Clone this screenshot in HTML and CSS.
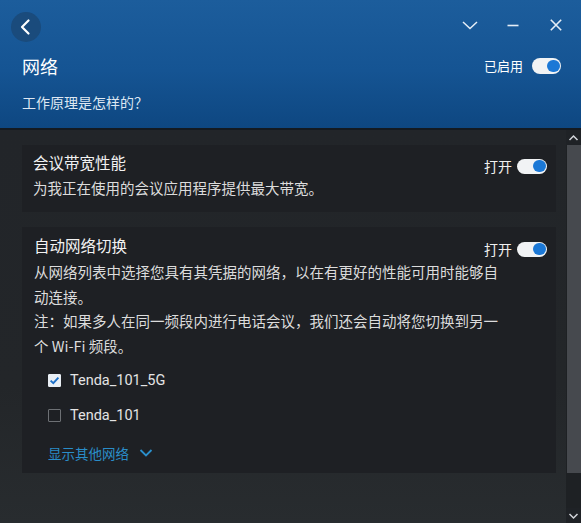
FILE: index.html
```html
<!DOCTYPE html>
<html lang="zh-CN">
<head>
<meta charset="utf-8">
<title>网络</title>
<link rel="stylesheet" href="styles.css">
</head>
<body>
<div class="app">
  <header class="header">
    <div class="topbar">
      <button class="back" aria-label="返回">
        <svg width="28" height="28" viewBox="0 0 28 28"><path d="M16.5 7.5 L10 14 L16.5 20.5" fill="none" stroke="#ffffff" stroke-width="2.2" stroke-linecap="round" stroke-linejoin="round"/></svg>
      </button>
      <div class="wincontrols">
        <svg width="16" height="16" viewBox="0 0 16 16"><path d="M1 5 L8 11.5 L15 5" fill="none" stroke="#e6eef7" stroke-width="1.5"/></svg>
        <svg width="16" height="16" viewBox="0 0 16 16"><path d="M2.5 8.5 H13.5" fill="none" stroke="#e6eef7" stroke-width="1.6"/></svg>
        <svg width="16" height="16" viewBox="0 0 16 16"><path d="M2.8 2.8 L13.2 13.2 M13.2 2.8 L2.8 13.2" fill="none" stroke="#e6eef7" stroke-width="1.6"/></svg>
      </div>
    </div>
    <div class="title-row">
      <h1 class="title">网络</h1>
      <div class="switch-group">
        <span class="switch-label head-label">已启用</span>
        <span class="toggle toggle-head"><span class="knob"></span></span>
      </div>
    </div>
    <div class="subtitle">工作原理是怎样的？</div>
  </header>

  <div class="main">
    <div class="content">
      <section class="card card-one">
        <div class="card-head">
          <h2 class="card-title">会议带宽性能</h2>
          <div class="switch-group card-switch">
            <span class="switch-label">打开</span>
            <span class="toggle"><span class="knob"></span></span>
          </div>
        </div>
        <p class="card-desc single">为我正在使用的会议应用程序提供最大带宽。</p>
      </section>

      <section class="card card-two">
        <div class="card-head">
          <h2 class="card-title">自动网络切换</h2>
          <div class="switch-group card-switch">
            <span class="switch-label">打开</span>
            <span class="toggle"><span class="knob"></span></span>
          </div>
        </div>
        <p class="card-desc multi">从网络列表中选择您具有其凭据的网络，以在有更好的性能可用时能够自动连接。<br>注：如果多人在同一频段内进行电话会议，我们还会自动将您切换到另一个 Wi-Fi 频段。</p>
        <div class="networks">
          <label class="net">
            <span class="check checked">
              <svg width="13" height="13" viewBox="0 0 13 13"><path d="M2.6 6.6 L5.3 9.2 L10.4 3.6" fill="none" stroke="#1c6fc8" stroke-width="1.9"/></svg>
            </span>
            <span class="net-name">Tenda_101_5G</span>
          </label>
          <label class="net second">
            <span class="check"></span>
            <span class="net-name">Tenda_101</span>
          </label>
        </div>
        <a class="more" href="#">显示其他网络
          <svg width="14" height="10" viewBox="0 0 14 10"><path d="M1.5 2 L7 7.5 L12.5 2" fill="none" stroke="#2b8fcc" stroke-width="1.8"/></svg>
        </a>
      </section>
    </div>
    <div class="scrollbar">
      <div class="sb-arrow">
        <svg width="11" height="8" viewBox="0 0 11 8"><path d="M1.5 6 L5.5 2 L9.5 6" fill="none" stroke="#d2d5d9" stroke-width="1.5"/></svg>
      </div>
      <div class="sb-thumb"></div>
      <div class="sb-track"></div>
      <div class="sb-arrow">
        <svg width="11" height="8" viewBox="0 0 11 8"><path d="M1.5 2 L5.5 6 L9.5 2" fill="none" stroke="#d2d5d9" stroke-width="1.5"/></svg>
      </div>
    </div>
  </div>
</div>
</body>
</html>
```

FILE: styles.css
```css
* { box-sizing: border-box; }

html, body {
  margin: 0;
  padding: 0;
  width: 581px;
  height: 523px;
  overflow: hidden;
  background: #25282c;
  font-family: "Noto Sans CJK SC", "Noto Sans", sans-serif;
  color: #e6e6e6;
}

.app {
  width: 581px;
  height: 523px;
  display: flex;
  flex-direction: column;
}

/* Header */
.header {
  height: 130px;
  flex: none;
  background: linear-gradient(180deg, #1c5d9c 0%, #155493 55%, #0e4781 100%);
  border-bottom: 2px solid #141a21;
  padding: 0 20px 0 22px;
  color: #ffffff;
}

.topbar {
  height: 53px;
  display: flex;
  align-items: center;
  justify-content: space-between;
}

.back {
  width: 30px;
  height: 30px;
  margin-left: -11px;
  margin-top: 1px;
  border: none;
  border-radius: 50%;
  background: #1a4b7c;
  padding: 0;
  display: flex;
  align-items: center;
  justify-content: center;
}

.wincontrols {
  display: flex;
  align-items: center;
  gap: 27px;
  margin-right: -2.5px;
  margin-top: -4px;
}

.title-row {
  height: 26px;
  display: flex;
  align-items: center;
  justify-content: space-between;
}

.title {
  margin: 0;
  font-size: 18px;
  font-weight: 400;
  line-height: 26px;
  color: #ffffff;
}

.subtitle {
  margin-top: 13px;
  font-size: 14px;
  line-height: 20px;
  color: #dde7f2;
}

.switch-group {
  display: flex;
  align-items: center;
}

.switch-label {
  font-size: 14px;
  line-height: 20px;
  color: #f0f0f0;
  margin-right: 5px;
}

.head-label {
  font-size: 13px;
  color: #ffffff;
  margin-right: 9px;
}

.toggle {
  width: 30px;
  height: 15px;
  border-radius: 8px;
  background: #f1f3f5;
  display: flex;
  align-items: center;
  justify-content: flex-end;
  padding-right: 1.5px;
}

.toggle-head {
  width: 29px;
  height: 16px;
}

.knob {
  width: 12.5px;
  height: 12.5px;
  border-radius: 50%;
  background: #1b78d6;
}

/* Main */
.main {
  flex: 1;
  display: flex;
  min-height: 0;
}

.content {
  flex: 1;
  padding: 15px 10px 0 22px;
  background: linear-gradient(180deg, #222529 0%, #232629 65%, #282c2f 100%);
}

.card {
  background: #1e2024;
  padding: 7px 9px 13px 11px;
}

.card-two {
  margin-top: 15px;
  padding: 8px 9px 9px 12px;
}

.card-head {
  display: flex;
  justify-content: space-between;
  align-items: flex-start;
  height: 20px;
}

.card-title {
  margin: 0;
  font-size: 15.5px;
  font-weight: 400;
  line-height: 20px;
  color: #f2f2f2;
}

.card-switch {
  margin-top: 4px;
}

.card-desc {
  margin: 0;
  color: #dcdcdc;
}

.card-desc.single {
  margin-top: 5px;
  font-size: 14.5px;
  line-height: 22px;
}

.card-desc.multi {
  margin-top: 5px;
  margin-right: 43px;
  font-size: 14.5px;
  line-height: 24.7px;
}

.networks {
  margin-top: 10px;
  padding-left: 14px;
  display: flex;
  flex-direction: column;
  gap: 11px;
}

.net {
  height: 24px;
  display: flex;
  align-items: center;
}

.check {
  width: 13px;
  height: 13px;
  border: 1px solid #6d7074;
  border-radius: 1px;
  margin-right: 9px;
  display: flex;
  align-items: center;
  justify-content: center;
}

.check.checked {
  background: #e9eef4;
  border-color: #e9eef4;
}

.check.checked svg {
  flex: none;
}

.net-name {
  font-family: Roboto, "Noto Sans", sans-serif;
  font-size: 14.5px;
  color: #e4e4e4;
}

.more {
  margin-top: 14px;
  margin-left: 14px;
  height: 22px;
  display: flex;
  align-items: center;
  gap: 10px;
  font-size: 13.5px;
  color: #2a8dc8;
  text-decoration: none;
}

/* Scrollbar */
.scrollbar {
  width: 15px;
  flex: none;
  display: flex;
  flex-direction: column;
  background: #1e2124;
}

.sb-arrow {
  height: 15px;
  display: flex;
  align-items: center;
  justify-content: center;
  background: #1f2226;
}

.sb-thumb {
  height: 328px;
  background: #46494e;
  margin-left: 1px;
}

.sb-track {
  flex: 1;
}
```
